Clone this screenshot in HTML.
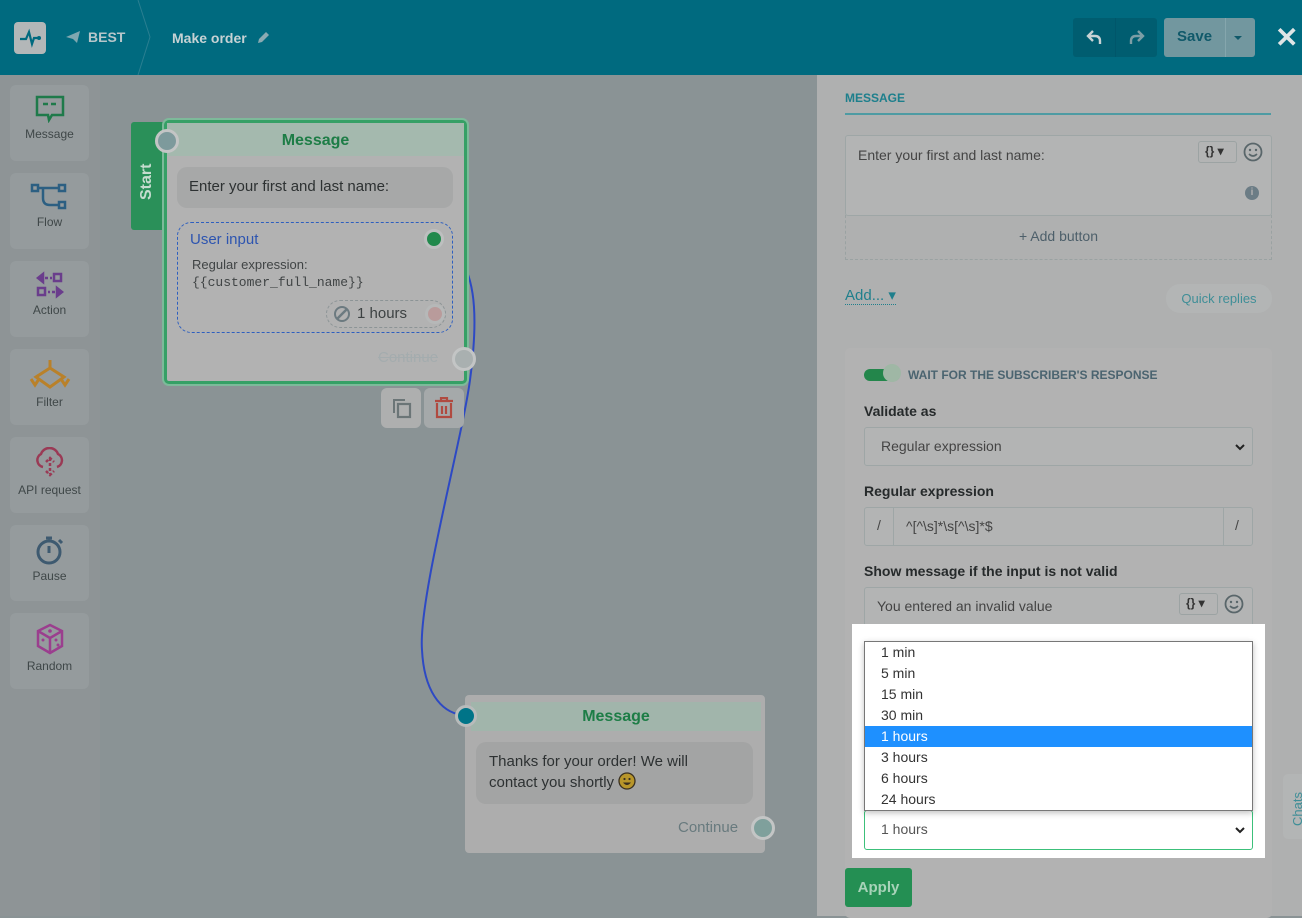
<!DOCTYPE html>
<html><head><meta charset="utf-8"><style>
*{box-sizing:border-box;margin:0;padding:0}
body{width:1302px;height:916px;overflow:hidden;position:relative;font-family:"Liberation Sans",sans-serif;background:#8a9395}
.a{position:absolute}
.hdr{left:0;top:0;width:1302px;height:75px;background:#006a7f}
.side{left:0;top:75px;width:100px;height:841px;background:#8e9496}
.it{left:10px;width:79px;height:76px;background:#959b9d;border-radius:6px;text-align:center;font-size:12px;color:#3f4748}
.it svg{display:block;margin:10px auto 4px}
.panel{left:817px;top:75px;width:485px;height:841px;background:#afb0b0}
.lbl{font-size:14px;font-weight:bold;color:#262a2b}
.inp{border:1px solid #9ea6a6;border-radius:3px;background:#b3b4b4;font-size:14px;color:#444}
.chev{position:absolute;right:6px;top:14px}
</style></head><body>
<div class="a hdr"></div>
<div class="a" style="left:14px;top:22px;width:32px;height:32px;background:#b3b7b8;border-radius:4px"><svg width="32" height="32"><path d="M6 17h6l3-7 3 12 2-6h5" fill="none" stroke="#006a7f" stroke-width="2.2"/><circle cx="25" cy="16" r="2" fill="#006a7f"/></svg></div>
<svg class="a" style="left:66px;top:31px" width="14" height="12"><path d="M0 6L14 0 11 12 7 8z" fill="#7fa7b0"/></svg>
<div class="a" style="left:88px;top:29px;color:#b7c6ca;font-weight:bold;font-size:14px">BEST</div>
<svg class="a" style="left:136px;top:0" width="16" height="75"><path d="M2 0L14 37 2 75" fill="none" stroke="#2a7f91" stroke-width="1"/></svg>
<div class="a" style="left:172px;top:30px;color:#c7d2d4;font-weight:bold;font-size:14px">Make order</div>
<svg class="a" style="left:256px;top:31px" width="14" height="14"><path d="M2 12l1-4 7-7 3 3-7 7z" fill="#8aaab2"/></svg>
<div class="a" style="left:1073px;top:18px;width:84px;height:39px;background:#005d70;border-radius:3px"></div>
<div class="a" style="left:1115px;top:18px;width:1px;height:39px;background:#00566a"></div>
<svg class="a" style="left:1086px;top:28px" width="18" height="18"><path d="M7 3L2 8l5 5M2 8h7q5 0 5 5v3" fill="none" stroke="#c7d2d4" stroke-width="2.4"/></svg>
<svg class="a" style="left:1127px;top:28px" width="18" height="18"><path d="M11 3l5 5-5 5M16 8H9q-5 0-5 5v3" fill="none" stroke="#7d9ea6" stroke-width="2.4"/></svg>
<div class="a" style="left:1164px;top:18px;width:91px;height:39px;background:#72979f;border-radius:3px"></div>
<div class="a" style="left:1177px;top:28px;color:#10596a;font-size:15px;font-weight:bold">Save</div>
<div class="a" style="left:1225px;top:18px;width:1px;height:39px;background:#85a6ad"></div>
<div class="a" style="left:1234px;top:36px;border:4px solid transparent;border-top:4px solid #10596a"></div>
<div class="a" style="left:1275px;top:21px;color:#dfe5e6;font-size:28px;font-weight:bold">✕</div>

<div class="a side"></div>
<div class="a it" style="top:85px"><svg width="30" height="28"><path d="M2 2h26v18H17l-3 5-1-5H2z" fill="none" stroke="#1f7a4a" stroke-width="2.5"/><path d="M8 9h5M16 9h5" stroke="#1f7a4a" stroke-width="2.5"/></svg>Message</div>
<div class="a it" style="top:173px"><svg width="40" height="28"><rect x="2" y="2" width="6" height="6" fill="none" stroke="#2c5f82" stroke-width="2.5"/><rect x="29" y="2" width="6" height="6" fill="none" stroke="#2c5f82" stroke-width="2.5"/><rect x="29" y="19" width="6" height="6" fill="none" stroke="#2c5f82" stroke-width="2.5"/><path d="M8 5h21M13 5v10q0 7 7 7h9" fill="none" stroke="#2c5f82" stroke-width="2.5"/></svg>Flow</div>
<div class="a it" style="top:261px"><svg width="30" height="28"><path d="M3 7l5-4v8zM10 7h3M15 7h2" stroke="#6a3d8c" stroke-width="2.5" fill="#6a3d8c"/><rect x="19" y="3" width="7" height="7" fill="none" stroke="#6a3d8c" stroke-width="2.5"/><rect x="3" y="17" width="7" height="7" fill="none" stroke="#6a3d8c" stroke-width="2.5"/><path d="M13 21h2M17 21h3M27 21l-5-4v8z" stroke="#6a3d8c" stroke-width="2.5" fill="#6a3d8c"/></svg>Action</div>
<div class="a it" style="top:349px"><svg width="44" height="32"><path d="M22 1v8M22 9L8 18l14 10 14-10z" fill="none" stroke="#b9812a" stroke-width="3"/><path d="M3 20l4 6 4-6M33 20l4 6 4-6" fill="none" stroke="#b9812a" stroke-width="3"/></svg>Filter</div>
<div class="a it" style="top:437px"><svg width="30" height="32"><path d="M8 20a7 7 0 0 1-2-13 9 9 0 0 1 17 0 7 7 0 0 1-1 13" fill="none" stroke="#9a3a55" stroke-width="2.5"/><path d="M15 11v16M11 15l4-4 4 4M11 24l4 4 4-4" fill="none" stroke="#9a3a55" stroke-width="2.5" stroke-dasharray="3 2"/></svg>API request</div>
<div class="a it" style="top:525px"><svg width="30" height="30"><circle cx="14" cy="17" r="11" fill="none" stroke="#3e5a70" stroke-width="3"/><path d="M14 11v7M11 3h6M24 5l3 3" stroke="#3e5a70" stroke-width="3"/></svg>Pause</div>
<div class="a it" style="top:613px"><svg width="30" height="32"><path d="M15 2l12 6v15l-12 7-12-7V8z M3 8l12 7 12-7M15 15v15" fill="none" stroke="#9b3e8e" stroke-width="2.5"/><circle cx="15" cy="8" r="1.8" fill="#9b3e8e"/><circle cx="8" cy="17" r="1.5" fill="#9b3e8e"/><circle cx="21" cy="17" r="1.5" fill="#9b3e8e"/><circle cx="23" cy="22" r="1.5" fill="#9b3e8e"/></svg>Random</div>

<svg class="a" style="left:0;top:0" width="817" height="916"><path d="M436 240C480 255 478 320 470 380S418 600 422 650C424 690 440 712 462 715" fill="none" stroke="#2d49c4" stroke-width="2"/></svg>

<div class="a" style="left:131px;top:122px;width:36px;height:108px;background:#2a9059;border-radius:3px 0 0 3px"></div>
<div class="a" style="left:138px;top:200px;color:#c6dccf;font-weight:bold;font-size:16px;transform:rotate(-90deg);transform-origin:0 0">Start</div>
<div class="a" style="left:164px;top:120px;width:303px;height:264px;background:#b2b2b2;border:3px solid #36a066;border-radius:5px;box-shadow:0 0 0 2px #7dba9a"></div>
<div class="a" style="left:167px;top:123px;width:297px;height:33px;background:#a4b9ae;text-align:center;color:#1d7d46;font-weight:bold;font-size:16px;line-height:36px">Message</div>
<div class="a" style="left:155px;top:129px;width:24px;height:24px;border-radius:50%;background:#7d9a9c;border:3px solid #c3c5c5"></div>
<div class="a" style="left:177px;top:167px;width:276px;height:41px;background:#a7a8a8;border-radius:10px;color:#2d3132;font-size:15px;padding:11px 12px">Enter your first and last name:</div>
<div class="a" style="left:177px;top:222px;width:276px;height:111px;border:1.5px dashed #2e5fbf;border-radius:14px"></div>
<div class="a" style="left:190px;top:231px;color:#2e55b0;font-size:15px">User input</div>
<div class="a" style="left:192px;top:257px;color:#404445;font-size:13px">Regular expression:</div>
<div class="a" style="left:192px;top:275px;color:#404445;font-size:13px;font-family:'Liberation Mono',monospace">{{customer_full_name}}</div>
<div class="a" style="left:424px;top:229px;width:20px;height:20px;border-radius:50%;background:#21894c;border:3px solid #bdbfbf"></div>
<div class="a" style="left:326px;top:300px;width:120px;height:28px;border:1.5px dashed #8c9496;border-radius:14px;color:#3d4243;font-size:15px;padding:4px 0 0 30px">1 hours</div>
<div class="a" style="left:334px;top:306px;width:16px;height:16px;border:2.5px solid #6c7a80;border-radius:50%"></div>
<svg class="a" style="left:334px;top:306px" width="16" height="16"><path d="M3 13L13 3" stroke="#6c7a80" stroke-width="2.5"/></svg>
<div class="a" style="left:425px;top:304px;width:20px;height:20px;border-radius:50%;background:#b99b9b;border:3px solid #b6b8b8"></div>
<div class="a" style="left:378px;top:349px;color:#a4acae;font-size:15px;text-decoration:line-through">Continue</div>
<div class="a" style="left:452px;top:347px;width:24px;height:24px;border-radius:50%;background:#a9b0b0;border:3px solid #c3c5c5"></div>
<div class="a" style="left:381px;top:388px;width:40px;height:40px;background:#aeafaf;border-radius:6px"></div>
<svg class="a" style="left:391px;top:397px" width="22" height="22"><path d="M2 2h12v2H4v12H2z" fill="#6b7577"/><rect x="7" y="7" width="12" height="13" fill="none" stroke="#6b7577" stroke-width="2.2"/></svg>
<div class="a" style="left:424px;top:388px;width:40px;height:40px;background:#a5a9aa;border-radius:6px"></div>
<svg class="a" style="left:433px;top:397px" width="22" height="22"><path d="M2 4h18M8 4V1h6v3M4 6v14h14V6M9 9v8M13 9v8" fill="none" stroke="#b04a40" stroke-width="2.2"/></svg>

<div class="a" style="left:465px;top:695px;width:300px;height:158px;background:#adadad;border-radius:4px"></div>
<div class="a" style="left:471px;top:702px;width:290px;height:29px;background:#a1b5ab;text-align:center;color:#1d7d46;font-weight:bold;font-size:16px;line-height:29px">Message</div>
<div class="a" style="left:455px;top:705px;width:22px;height:22px;border-radius:50%;background:#007488;border:3px solid #b8bbbb"></div>
<div class="a" style="left:476px;top:742px;width:277px;height:62px;background:#a3a4a4;border-radius:10px"></div>
<div class="a" style="left:489px;top:751px;width:225px;color:#2d3132;font-size:15px;line-height:21px">Thanks for your order! We will contact you shortly <svg width="18" height="18" style="vertical-align:-3px"><circle cx="9" cy="9" r="8" fill="#b8962a" stroke="#3a3020" stroke-width="1.3"/><circle cx="6.5" cy="7" r="1.1" fill="#3a3020"/><circle cx="11.5" cy="7" r="1.1" fill="#3a3020"/><path d="M5 10.5q4 5 8 0z" fill="#3a3020"/></svg></div>
<div class="a" style="left:678px;top:819px;color:#687a7e;font-size:15px">Continue</div>
<div class="a" style="left:751px;top:816px;width:24px;height:24px;border-radius:50%;background:#7fa09c;border:3px solid #c3c5c5"></div>

<div class="a panel"></div>
<div class="a" style="left:845px;top:91px;color:#1d7f8c;font-size:12px;font-weight:bold">MESSAGE</div>
<div class="a" style="left:845px;top:113px;width:426px;height:2px;background:#4e9ba3"></div>
<div class="a inp" style="left:845px;top:135px;width:427px;height:81px;padding:11px 12px">Enter your first and last name:</div>
<div class="a" style="left:1198px;top:141px;width:39px;height:22px;border:1px solid #9ca3a3;border-radius:3px;font-size:12px;padding:2px 6px;color:#333;font-weight:bold">{} ▾</div>
<svg class="a" style="left:1243px;top:142px" width="20" height="20"><circle cx="10" cy="10" r="8.5" fill="none" stroke="#59666a" stroke-width="1.8"/><circle cx="7" cy="8" r="1.2" fill="#59666a"/><circle cx="13" cy="8" r="1.2" fill="#59666a"/><path d="M6 12q4 4 8 0" fill="none" stroke="#59666a" stroke-width="1.6"/></svg>
<div class="a" style="left:1245px;top:186px;width:14px;height:14px;border-radius:50%;background:#6b7c85;color:#b0b0b0;font-size:10px;text-align:center;line-height:14px;font-weight:bold">i</div>
<div class="a" style="left:845px;top:215px;width:427px;height:45px;border:1px dashed #9aa2a2;border-top:none;text-align:center;color:#4d5f6a;font-size:14px;line-height:42px">+ Add button</div>
<div class="a" style="left:845px;top:286px;color:#1f7f8c;font-size:15px;border-bottom:1px dotted #1f7f8c">Add... ▾</div>
<div class="a" style="left:1166px;top:284px;width:106px;height:29px;background:#b3b5b5;border-radius:14px;color:#3f8e97;font-size:13px;text-align:center;line-height:29px">Quick replies</div>
<div class="a" style="left:845px;top:348px;width:427px;height:570px;background:#b2b2b2;border-radius:5px"></div>
<div class="a" style="left:864px;top:369px;width:36px;height:12px;background:#23864b;border-radius:6px"></div>
<div class="a" style="left:883px;top:364px;width:18px;height:18px;background:#9fb7a5;border-radius:50%"></div>
<div class="a" style="left:908px;top:368px;color:#4b6470;font-size:12px;font-weight:bold">WAIT FOR THE SUBSCRIBER'S RESPONSE</div>
<div class="a lbl" style="left:864px;top:403px">Validate as</div>
<div class="a inp" style="left:864px;top:427px;width:389px;height:39px;padding:10px 16px">Regular expression<svg class="chev" width="12" height="10"><path d="M2 3l4 4 4-4" fill="none" stroke="#222" stroke-width="2"/></svg></div>
<div class="a lbl" style="left:864px;top:483px">Regular expression</div>
<div class="a inp" style="left:864px;top:507px;width:389px;height:39px;padding:10px 0 0 41px">^[^\s]*\s[^\s]*$</div>
<div class="a" style="left:893px;top:508px;width:1px;height:37px;background:#9ea6a6"></div>
<div class="a" style="left:1223px;top:508px;width:1px;height:37px;background:#9ea6a6"></div>
<div class="a" style="left:877px;top:517px;color:#444;font-size:14px">/</div>
<div class="a" style="left:1235px;top:517px;color:#444;font-size:14px">/</div>
<div class="a lbl" style="left:864px;top:563px">Show message if the input is not valid</div>
<div class="a inp" style="left:864px;top:587px;width:389px;height:45px;padding:10px 12px;border-bottom:none">You entered an invalid value</div>
<div class="a" style="left:1179px;top:593px;width:39px;height:22px;border:1px solid #9ca3a3;border-radius:3px;font-size:12px;padding:2px 6px;color:#333;font-weight:bold">{} ▾</div>
<svg class="a" style="left:1224px;top:594px" width="20" height="20"><circle cx="10" cy="10" r="8.5" fill="none" stroke="#59666a" stroke-width="1.8"/><circle cx="7" cy="8" r="1.2" fill="#59666a"/><circle cx="13" cy="8" r="1.2" fill="#59666a"/><path d="M6 12q4 4 8 0" fill="none" stroke="#59666a" stroke-width="1.6"/></svg>

<div class="a" style="left:852px;top:624px;width:413px;height:234px;background:#fff"></div>
<div class="a" style="left:864px;top:810px;width:389px;height:40px;border:1px solid #3cc07a;border-radius:3px;font-size:14px;color:#555;padding:10px 16px">1 hours<svg class="chev" width="12" height="10"><path d="M2 3l4 4 4-4" fill="none" stroke="#222" stroke-width="2"/></svg></div>
<div class="a" style="left:864px;top:641px;width:389px;height:170px;background:#fff;border:1px solid #777;box-shadow:0 2px 6px rgba(0,0,0,.25);font-size:14px;color:#333;line-height:21px">
<div style="padding-left:16px">1 min</div><div style="padding-left:16px">5 min</div><div style="padding-left:16px">15 min</div><div style="padding-left:16px">30 min</div>
<div style="padding-left:16px;background:#1e90ff;color:#fff">1 hours</div>
<div style="padding-left:16px">3 hours</div><div style="padding-left:16px">6 hours</div><div style="padding-left:16px">24 hours</div></div>
<div class="a" style="left:845px;top:868px;width:67px;height:39px;background:#248f53;border-radius:3px;color:#a8d3b9;font-weight:bold;font-size:15px;text-align:center;line-height:39px">Apply</div>
<div class="a" style="left:1283px;top:774px;width:22px;height:65px;background:#b3b5b5;border-radius:5px 0 0 5px"></div>
<div class="a" style="left:1290px;top:826px;color:#3f8e97;font-size:13px;transform:rotate(-90deg);transform-origin:0 0">Chats</div>
</body></html>
